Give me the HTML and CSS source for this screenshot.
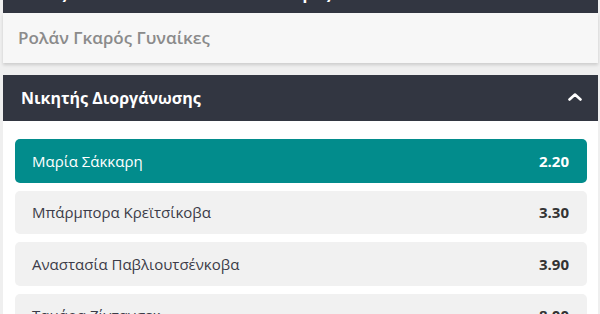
FILE: index.html
```html
<html>
    <head>
    <title>Ρολάν Γκαρός Γυναίκες</title>
    <link rel="stylesheet" href="styles.css">
    </head>

    <body>
        <div class="page">
            <!-- πάνω μπάρα (κομμένη) -->
            <div class="topbar"><span>Τένις · Γυναικείο Απλό · Ρολάν Γκαρός</span></div>

            <div class="subtitle">Ρολάν Γκαρός Γυναίκες</div>

            <div class="market">
                <div class="market-head">
                    <span>Νικητής Διοργάνωσης</span>
                    <svg class="chevron" width="14" height="8" viewBox="0 0 14 8">
                        <path d="M1.5 6.5 L7 1.5 L12.5 6.5" fill="none" stroke="#fff" stroke-width="2.6" stroke-linecap="round" stroke-linejoin="round"/>
                    </svg>
                </div>
                <ul class="market-body">
                    <li class="selected"><span>Μαρία Σάκκαρη</span><b>2.20</b></li>
                    <li><span>Μπάρμπορα Κρεϊτσίκοβα</span><b>3.30</b></li>
                    <li><span>Αναστασία Παβλιουτσένκοβα</span><b>3.90</b></li>
                    <li><span>Ταμάρα Ζίντανσεκ</span><b>8.00</b></li>
                </ul>
            </div>
        </div>
    </body>
</html>
```

FILE: styles.css
```css
*{
    padding:0;
    margin:0;
    list-style: none;
}

body{
    background-color: #efefef;
    font-family: "Open Sans", "Noto Sans", sans-serif;
    overflow:hidden;
}

/*κύρια περιοχή*/
.page{
    margin:0 2px 0 3px;
}

/*πάνω μπάρα, φαίνεται μόνο το κάτω μέρος*/
.topbar{
    height:13px;
    background-color: #323641;
    overflow:hidden;
    display:flex;
    align-items:flex-end;
    padding-left:21px;
}

.topbar span{
    color:#fff;
    font-weight:700;
    font-size:16px;
    line-height:22px;
    margin-bottom:9px;
    white-space:nowrap;
}

/*τίτλος διοργάνωσης*/
.subtitle{
    height:50px;
    line-height:50px;
    padding-left:15px;
    background-color: #f7f7f7;
    color:#8b8b8b;
    font-size:17px;
    font-weight:600;
    box-shadow: 0 2px 3px rgba(0,0,0,0.15);
}

.market{
    margin-top:12px;
}

/*επικεφαλίδα αγοράς*/
.market-head{
    height:46px;
    background-color: #323641;
    display:flex;
    align-items:center;
    justify-content:space-between;
    padding:0 16px 0 18px;
    color:#fff;
    font-size:16px;
    font-weight:700;
}

.chevron{
    display:block;
    margin-top:-2px;
}

/*λίστα επιλογών*/
.market-body{
    background-color: #fff;
    padding:18px 11px 20px 12px;
    display:flex;
    flex-direction:column;
    gap:8px;
}

.market-body li{
    height:43.5px;
    display:flex;
    align-items:center;
    justify-content:space-between;
    padding:0 18px 0 17px;
    background-color: #f1f1f1;
    border-radius:5px;
    color:#3c3c48;
    font-size:15px;
}

.market-body li b{
    font-weight:700;
    color:#333;
}

.market-body li.selected{
    background-color: #028c8c;
    color:#fff;
}

.market-body li.selected b{
    color:#fff;
}
```
